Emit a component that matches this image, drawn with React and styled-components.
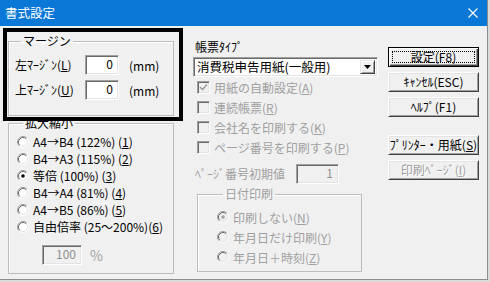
import React from 'react';
import styled, { createGlobalStyle } from 'styled-components';

const GlobalStyle = createGlobalStyle`
  html, body {
    margin: 0;
    padding: 0;
    background: #dadada;
  }
  body {
    font-family: 'Noto Sans CJK JP', 'Noto Sans', sans-serif;
    font-size: 12px;
  }
`;

const Window = styled.div`
  position: relative;
  width: 487px;
  height: 279px;
  background: #f0f0f0;
  border-right: 1px solid #8c8c8c;
  border-bottom: 1px solid #8c8c8c;
  overflow: hidden;
  color: #000;
`;

const TitleBar = styled.div`
  height: 26px;
  background: #0a78d6;
  color: #fff;
  display: flex;
  align-items: center;
  justify-content: space-between;
  padding: 0 9px 0 5px;
  font-size: 12.5px;
  line-height: 14px;
`;

const Body = styled.div`
  display: flex;
  padding: 8px 0 0 8px;
`;

const LeftCol = styled.div`
  width: 166px;
  display: flex;
  flex-direction: column;
`;

const MiddleCol = styled.div`
  width: 185px;
  margin-left: 19px;
  display: flex;
  flex-direction: column;
`;

const RightCol = styled.div`
  width: 91px;
  margin-left: 10px;
  display: flex;
  flex-direction: column;
`;

const Group = styled.fieldset`
  margin: 0;
  min-width: 0;
  border: 1px solid #bdbdbd;
  box-shadow: inset 1px 1px 0 #fff;
  padding: ${p => p.$pad};
  display: flex;
  flex-direction: column;
  gap: ${p => p.$gap || 0}px;
  color: ${p => (p.$disabled ? '#a0a0a0' : '#000')};
`;

const DateGroup = styled(Group)`
  width: 165px;
  box-sizing: border-box;
  margin: 3px 0 0 4px;
`;

const Legend = styled.legend`
  margin-left: 6px;
  padding: 0 2px;
  line-height: 14px;
  font-size: 12px;
`;

const Row = styled.div`
  display: flex;
  align-items: center;
  height: ${p => p.$h || 20}px;
  gap: ${p => p.$gap || 0}px;
  padding-left: ${p => p.$indent || 0}px;
  color: ${p => (p.$disabled ? '#a0a0a0' : 'inherit')};
  white-space: nowrap;
`;

const MarginLabel = styled.span`
  width: 70px;
  line-height: 14px;
`;

const Edit = styled.div`
  box-sizing: border-box;
  width: ${p => p.$w}px;
  height: 20px;
  background: ${p => (p.$disabled ? '#f0f0f0' : '#fff')};
  color: ${p => (p.$disabled ? '#8f8f8f' : '#000')};
  border-top: 1px solid #a0a0a0;
  border-left: 1px solid #a0a0a0;
  border-right: 1px solid #fff;
  border-bottom: 1px solid #fff;
  box-shadow: inset 1px 1px 0 #696969, inset -1px -1px 0 #e3e3e3;
  text-align: right;
  padding: 0 5px;
  line-height: 16px;
  font-size: 12px;
`;

const Unit = styled.span`
  margin-left: ${p => p.$gap}px;
  color: ${p => (p.$disabled ? '#a0a0a0' : '#000')};
  font-size: ${p => (p.$big ? 14 : 12)}px;
`;

const Mn = styled.span`
  text-decoration: underline;
  text-underline-offset: 1px;
`;

const PercentRow = styled.div`
  display: flex;
  align-items: center;
  margin: 10px 0 0 25px;
`;

const TypeLabel = styled.div`
  margin-top: 6px;
  padding-left: 2px;
  line-height: 14px;
`;

const Combo = styled.div`
  box-sizing: border-box;
  margin-top: 3px;
  height: 20px;
  display: flex;
  align-items: center;
  background: #fff;
  border-top: 1px solid #a0a0a0;
  border-left: 1px solid #a0a0a0;
  border-right: 1px solid #fff;
  border-bottom: 1px solid #fff;
  box-shadow: inset 1px 1px 0 #696969, inset -1px -1px 0 #e3e3e3;
  padding: 2px 2px 2px 3px;
  font-size: 12.5px;
`;

const ComboText = styled.span`
  flex: 1;
  line-height: 14px;
`;

const DropButton = styled.span`
  box-sizing: border-box;
  width: 15px;
  height: 14px;
  background: #f0f0f0;
  border-top: 1px solid #e3e3e3;
  border-left: 1px solid #e3e3e3;
  border-right: 1px solid #404040;
  border-bottom: 1px solid #404040;
  box-shadow: inset 1px 1px 0 #fff, inset -1px -1px 0 #a0a0a0;
  display: flex;
  align-items: center;
  justify-content: center;
`;

const Check = styled.span`
  box-sizing: border-box;
  width: 13px;
  height: 13px;
  flex: none;
  background: #f0f0f0;
  border-top: 1px solid #a0a0a0;
  border-left: 1px solid #a0a0a0;
  border-right: 1px solid #fff;
  border-bottom: 1px solid #fff;
  box-shadow: inset 1px 1px 0 #696969, inset -1px -1px 0 #e3e3e3;
  display: flex;
  align-items: center;
  justify-content: center;
`;

const PageRow = styled.div`
  display: flex;
  align-items: center;
  margin-top: 7px;
  color: #a0a0a0;
`;

const PageLabel = styled.span`
  width: 103px;
  padding-left: 2px;
  box-sizing: border-box;
  line-height: 14px;
`;

const Button = styled.div`
  box-sizing: border-box;
  height: 20px;
  margin-top: ${p => p.$top || 0}px;
  background: #f0f0f0;
  display: flex;
  align-items: center;
  justify-content: center;
  font-size: 12px;
  line-height: 14px;
  color: ${p => (p.$disabled ? '#a0a0a0' : '#000')};
  text-shadow: ${p => (p.$disabled ? '1px 1px 0 #fff' : 'none')};
  border: 1px solid ${p => (p.$default ? '#000' : 'transparent')};
  border-top-color: ${p => (p.$default ? '#000' : '#fff')};
  border-left-color: ${p => (p.$default ? '#000' : '#fff')};
  border-right-color: ${p => (p.$default ? '#000' : '#404040')};
  border-bottom-color: ${p => (p.$default ? '#000' : '#404040')};
  box-shadow: ${p =>
    p.$default
      ? 'inset 1px 1px 0 #fff, inset -1px -1px 0 #404040, inset -2px -2px 0 #a0a0a0'
      : 'inset 1px 1px 0 #e3e3e3, inset -1px -1px 0 #a0a0a0'};
  outline: ${p => (p.$default ? '1px dotted #000' : 'none')};
  outline-offset: -5px;
`;

const Highlight = styled.div`
  position: absolute;
  left: 3px;
  top: 28px;
  width: 180px;
  height: 93px;
  box-sizing: border-box;
  border: 4px solid #000;
  pointer-events: none;
`;

const Radio = ({ checked, disabled }) => (
  <svg width="12" height="12" viewBox="0 0 12 12" style={{ flex: 'none' }}>
    <circle cx="6" cy="6" r="5" fill={disabled ? '#f0f0f0' : '#fff'} />
    <path d="M2.11 9.89 A5.5 5.5 0 0 1 9.89 2.11" stroke="#a0a0a0" fill="none" />
    <path d="M9.89 2.11 A5.5 5.5 0 0 1 2.11 9.89" stroke="#fff" fill="none" />
    <path d="M2.82 9.18 A4.5 4.5 0 0 1 9.18 2.82" stroke="#696969" fill="none" />
    <path d="M9.18 2.82 A4.5 4.5 0 0 1 2.82 9.18" stroke="#e3e3e3" fill="none" />
    {checked && <circle cx="6" cy="6" r="1.8" fill={disabled ? '#a0a0a0' : '#000'} />}
  </svg>
);

const CheckBox = ({ checked }) => (
  <Check>
    {checked && (
      <svg width="9" height="9" viewBox="0 0 9 9">
        <path d="M1 4 L3.5 6.5 L8 1.5" stroke="#a0a0a0" strokeWidth="1.6" fill="none" />
      </svg>
    )}
  </Check>
);

const scales = [
  ['A4→B4 (122%) (', '1', ')'],
  ['B4→A3 (115%) (', '2', ')'],
  ['等倍 (100%) (', '3', ')'],
  ['B4→A4 (81%) (', '4', ')'],
  ['A4→B5 (86%) (', '5', ')'],
  ['自由倍率 (25～200%)(', '6', ')'],
];

const checks = [
  ['用紙の自動設定(', 'A', ')', true],
  ['連続帳票(', 'R', ')', false],
  ['会社名を印刷する(', 'K', ')', false],
  ['ページ番号を印刷する(', 'P', ')', false],
];

const dates = [
  ['印刷しない(', 'N', ')', true],
  ['年月日だけ印刷(', 'Y', ')', false],
  ['年月日＋時刻(', 'Z', ')', false],
];

export default function App() {
  return (
    <Window>
      <GlobalStyle />
      <TitleBar>
        <span>書式設定</span>
        <svg width="10" height="10" viewBox="0 0 10 10">
          <path d="M0.5 0.5 L9.5 9.5 M9.5 0.5 L0.5 9.5" stroke="#fff" strokeWidth="1.1" />
        </svg>
      </TitleBar>
      <Body>
        <LeftCol>
          <Group $pad="7px 6px 15px 6px" $gap={5}>
            <Legend>マージン</Legend>
            <Row>
              <MarginLabel>左ﾏｰｼﾞﾝ(<Mn>L</Mn>)</MarginLabel>
              <Edit $w={34}>0</Edit>
              <Unit $gap={10}>(mm)</Unit>
            </Row>
            <Row>
              <MarginLabel>上ﾏｰｼﾞﾝ(<Mn>U</Mn>)</MarginLabel>
              <Edit $w={34}>0</Edit>
              <Unit $gap={10}>(mm)</Unit>
            </Row>
          </Group>
          <Group $pad="3px 6px 8px 8px">
            <Legend>拡大縮小</Legend>
            {scales.map(([a, m, b], i) => (
              <Row key={a} $h={17} $gap={4}>
                <Radio checked={i === 2} />
                <span>
                  {a}
                  <Mn>{m}</Mn>
                  {b}
                </span>
              </Row>
            ))}
            <PercentRow>
              <Edit $w={40} $disabled>100</Edit>
              <Unit $gap={8} $disabled $big>%</Unit>
            </PercentRow>
          </Group>
        </LeftCol>

        <MiddleCol>
          <TypeLabel>帳票ﾀｲﾌﾟ</TypeLabel>
          <Combo>
            <ComboText>消費税申告用紙(一般用)</ComboText>
            <DropButton>
              <svg width="7" height="4" viewBox="0 0 7 4">
                <path d="M0 0 H7 L3.5 4 Z" fill="#000" />
              </svg>
            </DropButton>
          </Combo>
          {checks.map(([a, m, b, c]) => (
            <Row key={a} $indent={4} $gap={4} $disabled>
              <CheckBox checked={c} />
              <span>
                {a}
                <Mn>{m}</Mn>
                {b}
              </span>
            </Row>
          ))}
          <PageRow>
            <PageLabel>ﾍﾟｰｼﾞ番号初期値</PageLabel>
            <Edit $w={43} $disabled>1</Edit>
          </PageRow>
          <DateGroup $pad="6px 0 4px 19px" $disabled>
            <Legend>日付印刷</Legend>
            {dates.map(([a, m, b, c]) => (
              <Row key={a} $gap={4}>
                <Radio checked={c} disabled />
                <span>
                  {a}
                  <Mn>{m}</Mn>
                  {b}
                </span>
              </Row>
            ))}
          </DateGroup>
        </MiddleCol>

        <RightCol>
          <Button $top={13} $default>設定(F8)</Button>
          <Button $top={5}>ｷｬﾝｾﾙ(ESC)</Button>
          <Button $top={5}>ﾍﾙﾌﾟ(F1)</Button>
          <Button $top={18}>
            ﾌﾟﾘﾝﾀｰ・用紙(<Mn>S</Mn>)
          </Button>
          <Button $top={5} $disabled>
            印刷ﾍﾟｰｼﾞ(<Mn>I</Mn>)
          </Button>
        </RightCol>
      </Body>
      <Highlight />
    </Window>
  );
}
